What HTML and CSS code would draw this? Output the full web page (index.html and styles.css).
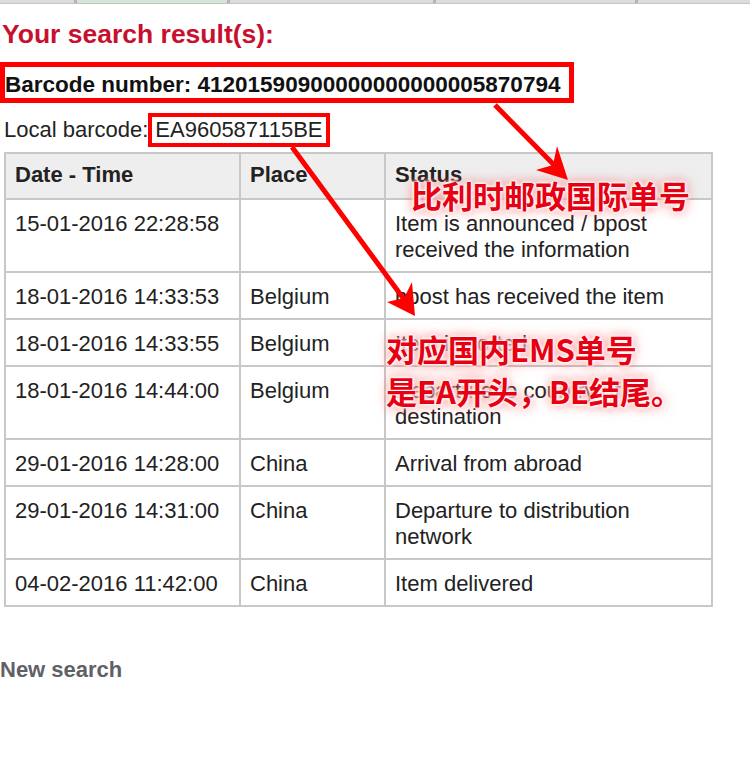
FILE: index.html
```html
<!DOCTYPE html>
<html lang="zh-CN">
<head>
<meta charset="utf-8">
<title>bpost track &amp; trace</title>
<link rel="stylesheet" href="styles.css">
</head>
<body>
<div class="page">
  <div class="tabs">
    <span class="tab tab-1"></span><span class="sep"></span>
    <span class="tab tab-2"></span><span class="sep"></span>
    <span class="tab tab-3"></span><span class="sep"></span>
    <span class="tab tab-4"></span><span class="sep"></span>
    <span class="tab tab-5"></span>
  </div>

  <h1 class="title">Your search result(s):</h1>

  <div class="barcode"><span class="mark mark-main">Barcode number: 41201590900000000000005870794</span></div>

  <div class="local"><span>Local barcode:</span><span class="mark mark-local">EA960587115BE</span></div>

  <table class="track">
    <colgroup><col class="c-date"><col class="c-place"><col class="c-status"></colgroup>
    <thead>
      <tr><th>Date - Time</th><th>Place</th><th>Status</th></tr>
    </thead>
    <tbody>
      <tr><td>15-01-2016 22:28:58</td><td></td><td>Item is announced / bpost received the information</td></tr>
      <tr><td>18-01-2016 14:33:53</td><td>Belgium</td><td>bpost has received the item</td></tr>
      <tr><td>18-01-2016 14:33:55</td><td>Belgium</td><td>Item is sorted</td></tr>
      <tr><td>18-01-2016 14:44:00</td><td>Belgium</td><td>Departure to country of destination</td></tr>
      <tr><td>29-01-2016 14:28:00</td><td>China</td><td>Arrival from abroad</td></tr>
      <tr><td>29-01-2016 14:31:00</td><td>China</td><td>Departure to distribution network</td></tr>
      <tr><td>04-02-2016 11:42:00</td><td>China</td><td>Item delivered</td></tr>
    </tbody>
  </table>

  <a class="new-search">New search</a>

  <svg class="arrows" width="750" height="767" viewBox="0 0 750 767">
    <line x1="495" y1="105" x2="561" y2="172" class="shaft"/>
    <polygon points="568,180 557,146 553,165 536,170" class="head"/>
    <line x1="292" y1="147" x2="406" y2="302" class="shaft"/>
    <polygon points="415,316 412,282 404,298 387,302" class="head"/>
  </svg>

  <div class="note note-intl">比利时邮政国际单号</div>
  <div class="note note-ems">对应国内EMS单号<br>是EA开头，BE结尾。</div>
</div>
</body>
</html>
```

FILE: styles.css
```css
body {
  margin: 0;
  background: #fff;
  font-family: "Liberation Sans", Arial, sans-serif;
  color: #222;
}

.page {
  position: relative;
  width: 750px;
  height: 767px;
  overflow: hidden;
}

/* cropped tab strip at the very top */
.tabs {
  display: flex;
  height: 3px;
  border-bottom: 1px solid #c4c4c4;
}
.tab { background: #dcdcdc; }
.sep { width: 3px; background: #b4b4b4; }
.tab-1 { width: 74px; }
.tab-2 { width: 150px; background: #d3e6d8; }
.tab-3 { width: 203px; }
.tab-4 { width: 199px; }
.tab-5 { flex: 1; }

.title {
  margin: 15px 0 0 2px;
  font-size: 26.5px;
  line-height: 30px;
  font-weight: bold;
  color: #c8102e;
}

.barcode {
  display: flex;
  margin-top: 13px;
}

.mark { border: 5px solid #f00; }

.mark-main {
  padding: 5px 9px 0 0;
  font-size: 22.5px;
  line-height: 26px;
  font-weight: bold;
  color: #111;
}

.local {
  display: flex;
  align-items: center;
  margin: 10px 0 0 4px;
  font-size: 22px;
  line-height: 26px;
  color: #222;
}

.mark-local {
  border-width: 4px;
  padding: 0 3px;
}

.track {
  margin: 5px 0 0 4px;
  width: 709px;
  table-layout: fixed;
  border-collapse: separate;
  border-spacing: 0;
  border-top: 2px solid #c8c8c8;
  border-left: 2px solid #c8c8c8;
  font-size: 22px;
  line-height: 26px;
  color: #222;
}
.c-date { width: 235px; }
.c-place { width: 145px; }
.c-status { width: 327px; }

.track th,
.track td {
  border-right: 2px solid #c8c8c8;
  border-bottom: 2px solid #c8c8c8;
  text-align: left;
  vertical-align: top;
}
.track th {
  background: #eeeeee;
  padding: 8px 10px 10px 9px;
  font-weight: bold;
}
.track td {
  padding: 11px 10px 8px 9px;
}

.new-search {
  display: block;
  margin-top: 50px;
  font-size: 22px;
  line-height: 26px;
  font-weight: bold;
  color: #606068;
}

/* annotation overlay */
.arrows {
  position: absolute;
  left: 0;
  top: 0;
  pointer-events: none;
}
.shaft { stroke: #f00; stroke-width: 5; }
.head { fill: #f00; }

.note {
  position: absolute;
  font-family: "Noto Sans CJK SC", sans-serif;
  font-weight: 700;
  font-size: 31px;
  line-height: 42px;
  color: #e60012;
  white-space: nowrap;
  text-shadow: 0 0 2px #fff, 0 0 3px #fff, 0 0 4px #fff, 0 0 5px #fff, 0 0 9px rgba(255, 60, 60, 0.65), 0 0 14px rgba(255, 90, 90, 0.5);
}
.note-intl { left: 411px; top: 174px; }
.note-ems { left: 386px; top: 328px; }
```
